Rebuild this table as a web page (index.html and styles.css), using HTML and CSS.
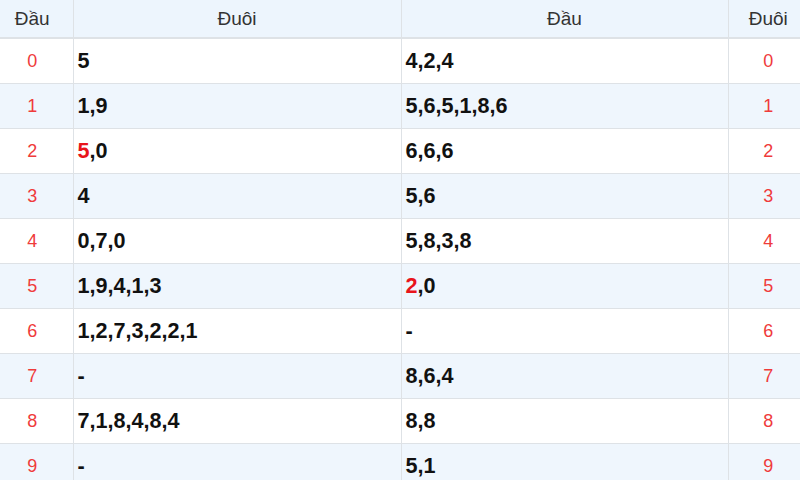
FILE: index.html
```html
<!DOCTYPE html>
<html>
<head>
<meta charset="utf-8">
<link rel="stylesheet" href="styles.css">
</head>
<body>
<div class="wrap">
<table class="loto">
  <colgroup>
    <col class="c-num"><col class="c-val"><col class="c-val2"><col class="c-num2">
  </colgroup>
  <thead>
    <tr><th>Đầu</th><th>Đuôi</th><th>Đầu</th><th>Đuôi</th></tr>
  </thead>
  <tbody>
    <tr><td class="n">0</td><td class="v">5</td><td class="v">4,2,4</td><td class="n">0</td></tr>
    <tr><td class="n">1</td><td class="v">1,9</td><td class="v">5,6,5,1,8,6</td><td class="n">1</td></tr>
    <tr><td class="n">2</td><td class="v"><span class="hl">5</span>,0</td><td class="v">6,6,6</td><td class="n">2</td></tr>
    <tr><td class="n">3</td><td class="v">4</td><td class="v">5,6</td><td class="n">3</td></tr>
    <tr><td class="n">4</td><td class="v">0,7,0</td><td class="v">5,8,3,8</td><td class="n">4</td></tr>
    <tr><td class="n">5</td><td class="v">1,9,4,1,3</td><td class="v"><span class="hl">2</span>,0</td><td class="n">5</td></tr>
    <tr><td class="n">6</td><td class="v">1,2,7,3,2,2,1</td><td class="v">-</td><td class="n">6</td></tr>
    <tr><td class="n">7</td><td class="v">-</td><td class="v">8,6,4</td><td class="n">7</td></tr>
    <tr><td class="n">8</td><td class="v">7,1,8,4,8,4</td><td class="v">8,8</td><td class="n">8</td></tr>
    <tr><td class="n">9</td><td class="v">-</td><td class="v">5,1</td><td class="n">9</td></tr>
  </tbody>
</table>
</div>
</body>
</html>
```
FILE: styles.css
```css
html, body {
  margin: 0;
  padding: 0;
  background: #fff;
  font-family: "Liberation Sans", Arial, sans-serif;
  overflow: hidden;
}
.wrap {
  width: 800px;
  overflow: hidden;
}
.loto {
  width: 816px;
  margin-left: -8px;
  border-collapse: collapse;
  table-layout: fixed;
}
.c-num { width: 81px; }
.c-val { width: 328px; }
.c-val2 { width: 327px; }
.c-num2 { width: 80px; }
.loto th, .loto td {
  border-left: 1px solid #dee2e6;
  border-bottom: 1px solid #dee2e6;
  padding: 0 4px;
}
.loto th:first-child, .loto td:first-child { border-left: none; }
.loto thead tr { background: #edf5fd; }
.loto th {
  height: 37px;
  font-weight: normal;
  font-size: 19px;
  color: #333;
  text-align: center;
  border-bottom: 2px solid #dee2e6;
  padding: 0;
}
.loto td { height: 44px; font-size: 18px; }
.loto tbody tr:nth-child(even) { background: #eff6fd; }
.n { color: #ef3b3b; text-align: center; }
.v { font-weight: bold; color: #111; text-align: left; font-size: 21.6px; }
.loto td.v { font-size: 21.6px; }
.hl { color: #e8141b; }
```
